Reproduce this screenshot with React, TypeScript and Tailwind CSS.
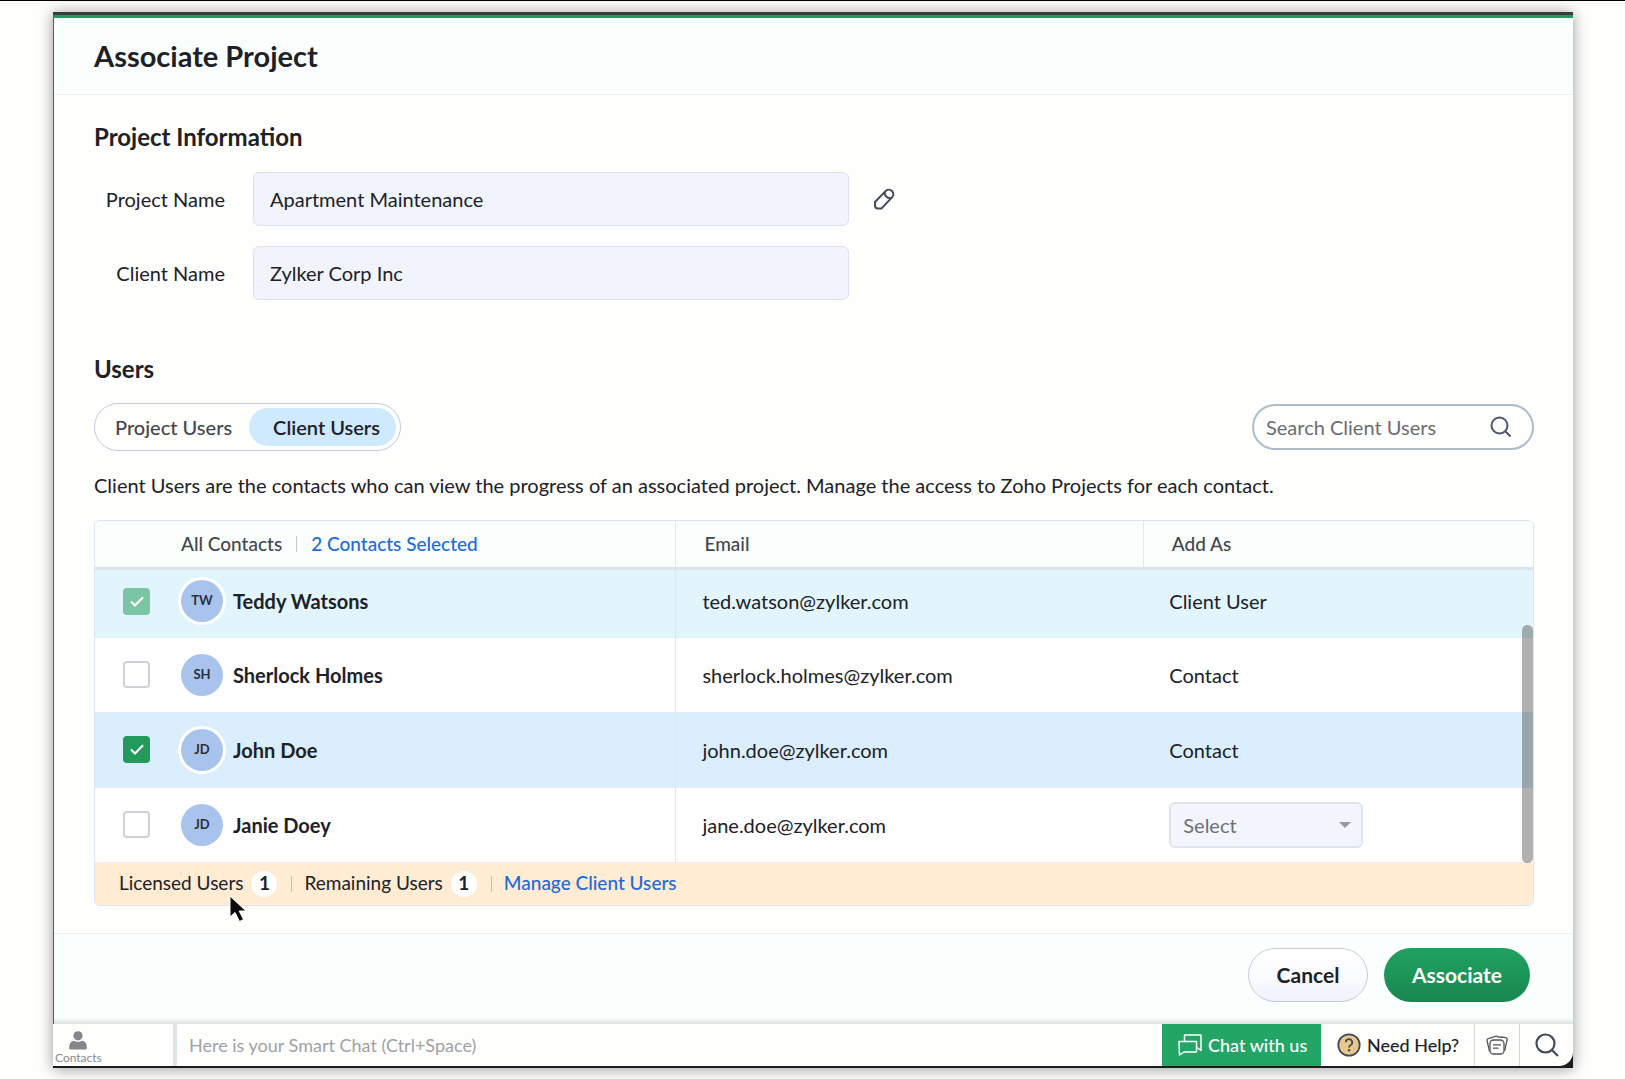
import type { ReactNode } from 'react';

type Contact = {
  initials: string;
  name: string;
  email: string;
  role: string | null;
  state: 'locked' | 'on' | 'off';
};

const contacts: Contact[] = [
  { initials: 'TW', name: 'Teddy Watsons', email: 'ted.watson@zylker.com', role: 'Client User', state: 'locked' },
  { initials: 'SH', name: 'Sherlock Holmes', email: 'sherlock.holmes@zylker.com', role: 'Contact', state: 'off' },
  { initials: 'JD', name: 'John Doe', email: 'john.doe@zylker.com', role: 'Contact', state: 'on' },
  { initials: 'JD', name: 'Janie Doey', email: 'jane.doe@zylker.com', role: null, state: 'off' },
];

const rowStyle = {
  locked: 'h-[69px] bg-[#e2f5fd] [&>td]:pb-1',
  off: 'h-[75px] bg-[#fefefe]',
  on: 'h-[75px] bg-[#daeefd]',
};

const boxStyle = {
  locked: 'bg-[#7cc5a3]',
  on: 'bg-[#219a5b]',
  off: 'border-2 border-[#cfd1d8] bg-white',
};

function Field({ id, label, value, children }: { id: string; label: string; value: string; children?: ReactNode }) {
  return (
    <div className="flex items-center">
      <label htmlFor={id} className="w-[131px] shrink-0 text-right text-xl">
        {label}
      </label>
      <input
        id={id}
        defaultValue={value}
        className="ml-7 h-[54px] w-full max-w-[596px] rounded-md border border-[#dde3ee] bg-[#f1f4fd] px-4 text-xl outline-none"
      />
      {children}
    </div>
  );
}

function ContactRow({ contact, index }: { contact: Contact; index: number }) {
  const id = `contact-${index}`;
  return (
    <tr className={`border-b border-[#e6edf7] ${rowStyle[contact.state]}`}>
      <td className="border-r border-[#e0e6ee] p-0">
        <div className="flex items-center pl-7">
          <span className="relative flex size-[27px] items-center justify-center">
            <input
              id={id}
              type="checkbox"
              defaultChecked={contact.state !== 'off'}
              disabled={contact.state === 'locked'}
              className={`absolute inset-0 size-full appearance-none rounded ${boxStyle[contact.state]}`}
            />
            {contact.state !== 'off' && (
              <svg viewBox="0 0 14 11" className="pointer-events-none relative h-[11px] w-3.5" fill="none" stroke="#fff" strokeWidth="2" aria-hidden="true">
                <path d="M1 5.5 5 9.5 13 1.2" />
              </svg>
            )}
          </span>
          <span
            className={`ml-[31px] flex size-[42px] items-center justify-center rounded-full bg-[#a9c4ec] text-[13px] font-bold text-[#2b2f3a] ${
              contact.state === 'off' ? '' : 'ring-3 ring-white'
            }`}
          >
            {contact.initials}
          </span>
          <label htmlFor={id} className="ml-2.5 text-xl font-bold">
            {contact.name}
          </label>
        </div>
      </td>
      <td className="py-0 pr-0 pl-[26px] text-xl">{contact.email}</td>
      <td className="py-0 pr-0 pl-[26px] text-xl">
        {contact.role ?? (
          <span className="relative inline-flex items-center align-middle">
            <select
              aria-label="Add as"
              className="h-[46px] w-[194px] appearance-none rounded-md border-2 border-[#dfe5ef] bg-[#f2f5fc] px-3 text-xl text-[#6e7076] outline-none"
            >
              <option>Select</option>
            </select>
            <svg viewBox="0 0 12 6" className="pointer-events-none absolute right-3 h-1.5 w-3" fill="#96989c" aria-hidden="true">
              <path d="M0 0h12L6 6z" />
            </svg>
          </span>
        )}
      </td>
    </tr>
  );
}

function Counter({ label, value }: { label: string; value: number }) {
  return (
    <>
      <span>{label}</span>
      <span className="ml-2 flex size-[26px] items-center justify-center rounded-full bg-white font-bold">{value}</span>
      <span className="mr-3 ml-3.5 h-4 w-px bg-[#c9bfb0]" />
    </>
  );
}

export default function App() {
  return (
    <div className="min-h-screen border-t border-black bg-[#fefefd] pt-[11px] pr-[52px] pb-2 pl-[53px] font-['Lato',sans-serif] text-[#202127]">
      <main className="overflow-hidden border-t-3 border-b-2 border-t-[#3a3b3d] border-b-[#1b1b20] bg-[#fefefd] shadow-[0_1px_14px_rgba(0,0,0,0.4)]">
        <div className="border-t-3 border-l border-t-[#219a5b] border-l-[#5a5b62]">
          <header className="flex h-[77px] items-center border-b border-[#e9eefa] bg-[#fafffe] pl-10">
            <h1 className="text-[29px] font-bold">Associate Project</h1>
          </header>

          <div className="pt-[26px] pr-[39px] pb-[27px] pl-10">
            <h2 className="text-2xl font-bold">Project Information</h2>
            <div className="mt-[19px] flex flex-col gap-5">
              <Field id="project-name" label="Project Name" value="Apartment Maintenance">
                <button type="button" aria-label="Edit project name" className="ml-6">
                  <svg viewBox="0 0 22 22" className="size-[22px]" fill="none" stroke="#434a5b" strokeWidth="2" aria-hidden="true">
                    <path d="M2 14 12.800 2.900a4.500 4.500 0 0 1 6.400 6.300L8.500 20.500H5a3 3 0 0 1-3-3z" />
                    <path d="M11.800 4.200c-.7 3 2.600 6.400 6 5.700" />
                  </svg>
                </button>
              </Field>
              <Field id="client-name" label="Client Name" value="Zylker Corp Inc" />
            </div>

            <h2 className="mt-[53px] text-2xl font-bold">Users</h2>
            <div className="mt-[18px] flex items-center justify-between">
              <div className="flex h-12 items-center rounded-full border border-[#c3cbdc] pr-1 pl-5 text-xl font-medium">
                <button type="button" className="text-[#44464e]">
                  Project Users
                </button>
                <button type="button" className="ml-[17px] h-[38px] rounded-full bg-[#cfe9fe] pr-4 pl-6 font-semibold">
                  Client Users
                </button>
              </div>
              <div className="flex h-[46px] w-[282px] items-center rounded-full border-2 border-[#b0bccd] pr-5 pl-3">
                <input
                  type="search"
                  aria-label="Search Client Users"
                  placeholder="Search Client Users"
                  className="min-w-0 flex-1 text-xl outline-none placeholder:text-[#6b6d74]"
                />
                <svg viewBox="0 0 22 22" className="size-[22px]" fill="none" stroke="#4b556b" strokeWidth="2" aria-hidden="true">
                  <circle cx="9.500" cy="9.500" r="8" />
                  <path d="m15.500 15.500 5 5" />
                </svg>
              </div>
            </div>
            <p className="mt-5 text-xl">
              Client Users are the contacts who can view the progress of an associated project. Manage the access to Zoho
              Projects for each contact.
            </p>

            <div className="relative mt-[21px]">
              <div className="overflow-hidden rounded-md border border-[#dbe4f1]">
                <table className="w-full table-fixed border-collapse text-left">
                  <colgroup>
                    <col className="w-[40.4%]" />
                    <col className="w-[32.500%]" />
                    <col />
                  </colgroup>
                  <thead>
                    <tr className="h-[47px] border-b-3 border-[#dde5ec] bg-[#fafffe] text-[19px] text-[#44464e]">
                      <th className="border-r border-r-[#dfe6f4] py-0 pr-0 pl-[86px] font-medium">
                        <div className="flex items-center">
                          All Contacts
                          <span className="mx-3.5 h-4 w-px bg-[#c5c9d0]" />
                          <a href="#selected" className="text-[#1c6bd6]">
                            2 Contacts Selected
                          </a>
                        </div>
                      </th>
                      <th className="border-r border-r-[#dfe6f4] py-0 pr-0 pl-7 font-medium">Email</th>
                      <th className="py-0 pr-0 pl-7 font-medium">Add As</th>
                    </tr>
                  </thead>
                  <tbody>
                    {contacts.map((contact, index) => (
                      <ContactRow key={contact.email} contact={contact} index={index} />
                    ))}
                  </tbody>
                </table>
                <div className="flex h-[42px] items-center bg-[#ffecd3] pl-6 text-[19px]">
                  <Counter label="Licensed Users" value={1} />
                  <Counter label="Remaining Users" value={1} />
                  <a href="#manage" className="font-medium text-[#1c6bd6]">
                    Manage Client Users
                  </a>
                </div>
              </div>
              <div className="absolute right-px bottom-[43px] h-[238px] w-[11px] rounded-full bg-black/30" />
              <svg viewBox="0 0 18 28" className="absolute -bottom-[17px] left-[135px] h-7 w-[18px]" aria-hidden="true">
                <path d="M1 1v21l5-4.500 4.500 9 4-2-4.300-8.500H17z" fill="#0b0b0d" stroke="#fff" strokeWidth="1" />
              </svg>
            </div>
          </div>

          <footer className="flex h-[91px] items-start justify-end gap-4 border-t border-[#e9eefa] bg-[#fafffe] pt-3.5 pr-[43px] text-[21px] font-bold shadow-[inset_0_-6px_5px_-3px_rgba(0,0,0,0.12)]">
            <button type="button" className="h-[54px] w-[120px] rounded-full border border-[#c5cbdc] bg-linear-to-b from-white via-[#fbfcff] to-[#eff2fd]">
              Cancel
            </button>
            <button type="button" className="h-[54px] w-[146px] rounded-full bg-linear-to-b from-[#20a161] via-[#1d9558] to-[#178650] text-white">
              Associate
            </button>
          </footer>
        </div>

        <div className="flex h-[42px] items-stretch bg-[#1b1b20]">
          <div className="flex flex-1 items-stretch overflow-hidden rounded-br-[14px] bg-[#fefefd]">
            <button type="button" className="flex w-[124px] flex-col items-start justify-end border-r-4 border-[#e3e4e8] pl-0.5 text-xs leading-4 text-[#8b8c90]">
              <svg viewBox="0 0 18 19" className="ml-3.5 h-[19px] w-[18px]" fill="#858689" aria-hidden="true">
                <circle cx="9" cy="4.800" r="4.600" />
                <path d="M1 18.500q-1-.4-.8-2.500Q.5 10.500 4.500 9.800 9 12 13.500 9.800q4 .7 4.300 6.200.2 2.100-.8 2.500z" />
              </svg>
              Contacts
            </button>
            <input
              aria-label="Smart Chat"
              placeholder="Here is your Smart Chat (Ctrl+Space)"
              className="min-w-0 flex-1 px-3 text-lg outline-none placeholder:text-[#a0a1a5]"
            />
            <button type="button" className="flex w-[159px] items-center gap-1.5 bg-[#23a565] pl-4 text-lg font-medium text-white">
              <svg viewBox="0 0 24 22" className="h-[22px] w-6" fill="none" stroke="#fff" strokeWidth="1.500" strokeLinejoin="round" aria-hidden="true">
                <path d="M6.500 7V1h16.500v15.500l-4-3" />
                <path d="M1 7.500h17.500v10.500H6L1.500 21z" />
              </svg>
              Chat with us
            </button>
            <button type="button" className="flex w-[154px] items-center gap-1.5 border-r border-[#d5d5d8] pl-4 text-lg font-medium">
              <svg viewBox="0 0 24 24" className="size-6" fill="none" aria-hidden="true">
                <circle cx="12" cy="12" r="10.700" fill="#e6c98b" stroke="#434a5b" strokeWidth="1.800" />
                <path d="M8.800 9.300a3.200 3.200 0 1 1 4.600 2.900q-1.400.7-1.400 2.300" stroke="#434a5b" strokeWidth="1.800" />
                <circle cx="12" cy="17.300" r="1.200" fill="#434a5b" />
              </svg>
              Need Help?
            </button>
            <button type="button" aria-label="Recent items" className="flex w-[45px] items-center justify-center border-r border-[#d5d5d8]">
              <svg viewBox="0 0 22 20" className="h-5 w-[22px]" fill="none" stroke="#55565b" strokeWidth="1.300" strokeLinejoin="round" strokeLinecap="round" aria-hidden="true">
                <rect x="4" y="5" width="14" height="14" rx="3.500" />
                <path d="M7.500 9.800h7M7.500 13.200h4.500" />
                <path d="M3.500 16 1 5.500Q.8 4 2.200 3.600L10.500 1.200q1.400-.2 1.800 1.200" />
                <path d="M13 2q4 .1 6.800.6 1.600.4 1.400 1.900l-2.500 11" />
              </svg>
            </button>
            <button type="button" aria-label="Search" className="flex w-[53px] items-center justify-center">
              <svg viewBox="0 0 24 24" className="size-6" fill="none" stroke="#434a5b" strokeWidth="2.200" aria-hidden="true">
                <circle cx="10.500" cy="10.500" r="9" />
                <path d="m17 17 6 6" />
              </svg>
            </button>
          </div>
        </div>
      </main>
    </div>
  );
}
